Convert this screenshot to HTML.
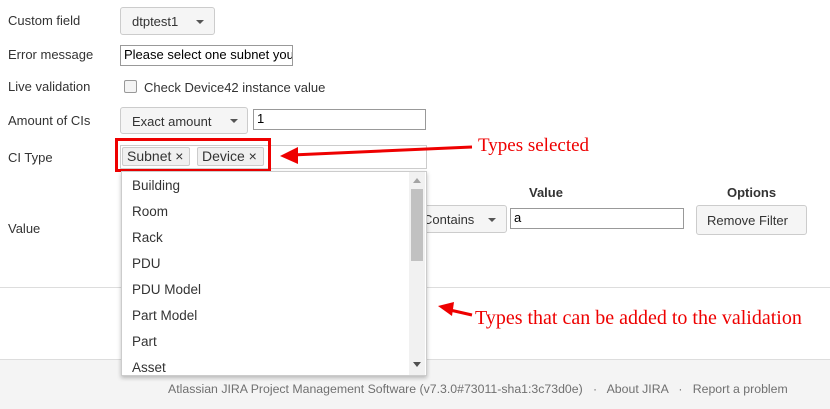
<!DOCTYPE html>
<html><head><meta charset="utf-8"><style>
body{margin:0;width:830px;height:408px;background:#fff;font-family:"Liberation Sans",Arial,sans-serif;font-size:13px;color:#333;position:relative;overflow:hidden}
.a{position:absolute}
.btn{position:absolute;background:#f5f5f5;border:1px solid #ccc;border-radius:3px;box-sizing:border-box;font-size:13px;color:#333}
.inp{position:absolute;border:1px solid #999;box-sizing:border-box;background:#fff;font-size:13px;padding:2px 3px;color:#000}
.caret{position:absolute;width:0;height:0;border-left:4px solid transparent;border-right:4px solid transparent;border-top:4px solid #555}
.tag{position:absolute;top:147px;height:19px;border:1px solid #ccc;background:#f0f0f0;border-radius:2px;box-sizing:border-box;font-size:14px;line-height:17px;padding:0 4px;color:#333}
.dd{position:absolute;left:121px;top:171px;width:304px;height:203px;background:#fff;border:1px solid #ccc;box-shadow:0 2px 4px rgba(0,0,0,.25);overflow:hidden}
.dd div{position:absolute;left:10px;font-size:13.5px;color:#333}
.red{color:#e00;font-family:"Liberation Serif",serif}
</style></head><body>
<div class="a" style="left:8px;top:13px">Custom field</div>
<div class="btn" style="left:120px;top:7px;width:95px;height:28px;padding:6px 11px">dtptest1</div>
<div class="caret" style="left:196px;top:20px"></div>
<div class="a" style="left:8px;top:47px">Error message</div>
<div class="inp" style="left:120px;top:45px;width:173px;height:21px;padding:1px 3px;overflow:hidden;white-space:nowrap">Please select one subnet you</div>
<div class="a" style="left:8px;top:79px">Live validation</div>
<div class="a" style="left:124px;top:80px;width:11px;height:11px;border:1px solid #999;border-radius:2px;background:#f4f4f4"></div>
<div class="a" style="left:144px;top:80px">Check Device42 instance value</div>
<div class="a" style="left:8px;top:113px">Amount of CIs</div>
<div class="btn" style="left:120px;top:107px;width:128px;height:27px;padding:6px 11px">Exact amount</div>
<div class="caret" style="left:230px;top:119px"></div>
<div class="inp" style="left:253px;top:109px;width:173px;height:21px;padding:1px 3px">1</div>
<div class="a" style="left:8px;top:150px">CI Type</div>
<div class="a" style="left:120px;top:145px;width:307px;height:24px;border:1px solid #ccc;box-sizing:border-box"></div>
<div class="tag" style="left:122px;width:68px">Subnet ×</div>
<div class="tag" style="left:197px;width:67px">Device ×</div>
<div class="a" style="left:115px;top:138px;width:156px;height:34px;border:3px solid #e00;box-sizing:border-box"></div>
<svg class="a" style="left:276px;top:136px" width="200" height="30"><line x1="196" y1="11" x2="16" y2="19" stroke="#e00" stroke-width="3"/><polygon points="4,20 22,11 22,28" fill="#e00"/></svg>
<div class="a red" style="left:478px;top:135px;font-size:19px">Types selected</div>
<div class="a" style="left:8px;top:221px">Value</div>
<div class="a" style="left:529px;top:185px;font-weight:bold">Value</div>
<div class="a" style="left:727px;top:185px;font-weight:bold">Options</div>
<div class="btn" style="left:400px;top:205px;width:107px;height:28px;padding:6px 22px">Contains</div>
<div class="caret" style="left:488px;top:218px"></div>
<div class="inp" style="left:510px;top:208px;width:174px;height:21px;padding:1px 3px">a</div>
<div class="btn" style="left:696px;top:205px;width:111px;height:30px;padding:7px 10px">Remove Filter</div>
<div class="a" style="left:0;top:287px;width:830px;height:1px;background:#ddd"></div>
<svg class="a" style="left:436px;top:300px" width="40" height="20"><line x1="36" y1="15" x2="14" y2="10" stroke="#e00" stroke-width="3"/><polygon points="2,6 18,2 16,16" fill="#e00"/></svg>
<div class="a red" style="left:475px;top:307px;font-size:20px">Types that can be added to the validation</div>
<div class="a" style="left:0;top:359px;width:830px;height:49px;background:#f4f4f4;border-top:1px solid #ddd"></div>
<div class="a" style="left:168px;top:382px;font-size:12.3px;color:#707070;white-space:nowrap">Atlassian JIRA Project Management Software (v7.3.0#73011-sha1:3c73d0e) &nbsp; · &nbsp; About JIRA &nbsp; · &nbsp; Report a problem</div>
<div class="dd">
<div style="top:6px">Building</div><div style="top:32px">Room</div><div style="top:58px">Rack</div><div style="top:84px">PDU</div><div style="top:110px">PDU Model</div><div style="top:136px">Part Model</div><div style="top:162px">Part</div><div style="top:188px">Asset</div>
<span class="a" style="left:287px;top:0;width:16px;height:203px;background:#f1f1f1"></span>
<span class="a" style="left:289px;top:17px;width:12px;height:72px;background:#c1c1c1"></span>
<span class="a" style="left:291px;top:6px;border-left:4px solid transparent;border-right:4px solid transparent;border-bottom:5px solid #a3a3a3"></span>
<span class="a" style="left:291px;top:190px;border-left:4px solid transparent;border-right:4px solid transparent;border-top:5px solid #505050"></span>
</div>
</body></html>
